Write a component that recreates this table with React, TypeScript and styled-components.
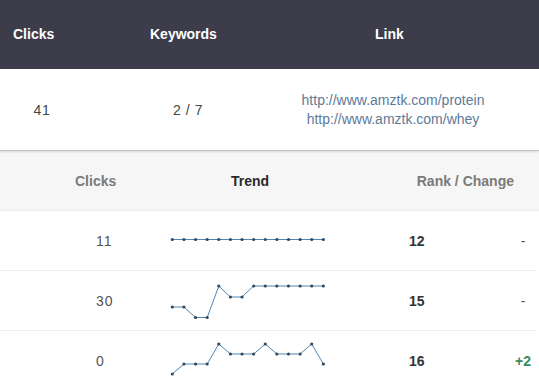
import React from "react";
import styled, { createGlobalStyle } from "styled-components";

const Global = createGlobalStyle`
  html, body { margin: 0; padding: 0; background: #ffffff; }
  body { font-family: "Liberation Sans", Arial, sans-serif; }
  * { box-sizing: border-box; }
`;

const Page = styled.div`
  width: 539px;
  overflow: hidden;
`;

const TopHeader = styled.div`
  height: 69px;
  background: #3d3c4b;
  display: grid;
  grid-template-columns: 150px 225px 1fr;
  align-items: center;
  padding-bottom: 1px;
`;

const TopHeadCell = styled.div<{ $pl?: number }>`
  color: #ffffff;
  font-weight: bold;
  font-size: 14px;
  padding-left: ${(p) => p.$pl ?? 0}px;
`;

const SummaryRow = styled.div`
  height: 82px;
  display: grid;
  grid-template-columns: 84px 208px 202px;
  align-items: center;
  border-bottom: 1px solid #c4c4c4;
  box-shadow: 0 1px 2px rgba(0, 0, 0, 0.12);
  position: relative;
  z-index: 1;
`;

const SummaryCell = styled.div`
  text-align: center;
  font-size: 14px;
  color: #444;
  letter-spacing: 0.6px;
  padding-top: 1px;
`;

const LinkList = styled.div`
  text-align: center;
  font-size: 14px;
  line-height: 19px;
  color: #5d7b98;
`;

const SubHeader = styled.div`
  height: 60px;
  background: #f6f6f6;
  border-bottom: 1px solid #ececec;
  display: grid;
  grid-template-columns: 162px 176px 1fr;
  align-items: center;
`;

const SubHeadCell = styled.div<{ $dark?: boolean; $align?: string; $pl?: number; $pr?: number }>`
  font-weight: bold;
  font-size: 14px;
  color: ${(p) => (p.$dark ? "#2a2a2a" : "#7a7a7a")};
  text-align: ${(p) => p.$align ?? "left"};
  padding-left: ${(p) => p.$pl ?? 0}px;
  padding-right: ${(p) => p.$pr ?? 0}px;
`;

const Row = styled.div`
  height: 60px;
  display: grid;
  grid-template-columns: 160px 176px 144px 1fr;
  align-items: center;
  border-bottom: 1px solid #ececec;
  margin-right: 3px;
`;

const ClicksCell = styled.div`
  padding-left: 96px;
  font-size: 14px;
  color: #555;
  letter-spacing: 1px;
`;

const TrendCell = styled.div`
  align-self: stretch;
  display: flex;
`;

const RankCell = styled.div`
  padding-left: 73px;
  font-size: 14px;
  font-weight: bold;
  color: #333;
`;

const ChangeCell = styled.div<{ $up?: boolean }>`
  text-align: center;
  padding-left: 30px;
  font-size: 14px;
  font-weight: ${(p) => (p.$up ? "bold" : "normal")};
  color: ${(p) => (p.$up ? "#3a8a5c" : "#555")};
`;

const Sparkline: React.FC<{ ys: number[] }> = ({ ys }) => {
  const pts = ys.map((y, i) => [12.3 + i * 11.62, y] as const);
  const d = pts.map((p) => `${p[0].toFixed(1)},${p[1]}`).join(" ");
  return (
    <svg width="176" height="59" viewBox="0 0 176 59">
      <polyline points={d} fill="none" stroke="#4f86b3" strokeWidth="1" />
      {pts.map((p, i) => (
        <circle key={i} cx={p[0]} cy={p[1]} r="1.6" fill="#34475a" />
      ))}
    </svg>
  );
};

const rows = [
  { clicks: "11", rank: "12", change: "-", ys: Array(14).fill(28.5) },
  {
    clicks: "30",
    rank: "15",
    change: "-",
    ys: [36, 36, 46.5, 46.5, 15, 26, 26, 15, 15, 15, 15, 15, 15, 15],
  },
  {
    clicks: "0",
    rank: "16",
    change: "+2",
    ys: [43, 33, 33, 33, 13, 23, 23, 23, 13, 23, 23, 23, 13, 33],
  },
];

export default function App() {
  return (
    <Page>
      <Global />
      <TopHeader>
        <TopHeadCell $pl={13}>Clicks</TopHeadCell>
        <TopHeadCell>Keywords</TopHeadCell>
        <TopHeadCell>Link</TopHeadCell>
      </TopHeader>
      <SummaryRow>
        <SummaryCell>41</SummaryCell>
        <SummaryCell>2 / 7</SummaryCell>
        <LinkList>
          <div>http://www.amztk.com/protein</div>
          <div>http://www.amztk.com/whey</div>
        </LinkList>
      </SummaryRow>
      <SubHeader>
        <SubHeadCell $pl={75}>Clicks</SubHeadCell>
        <SubHeadCell $dark $align="center">Trend</SubHeadCell>
        <SubHeadCell $align="right" $pr={25}>Rank / Change</SubHeadCell>
      </SubHeader>
      {rows.map((r, i) => (
        <Row key={i}>
          <ClicksCell>{r.clicks}</ClicksCell>
          <TrendCell>
            <Sparkline ys={r.ys} />
          </TrendCell>
          <RankCell>{r.rank}</RankCell>
          <ChangeCell $up={r.change !== "-"}>{r.change}</ChangeCell>
        </Row>
      ))}
    </Page>
  );
}
